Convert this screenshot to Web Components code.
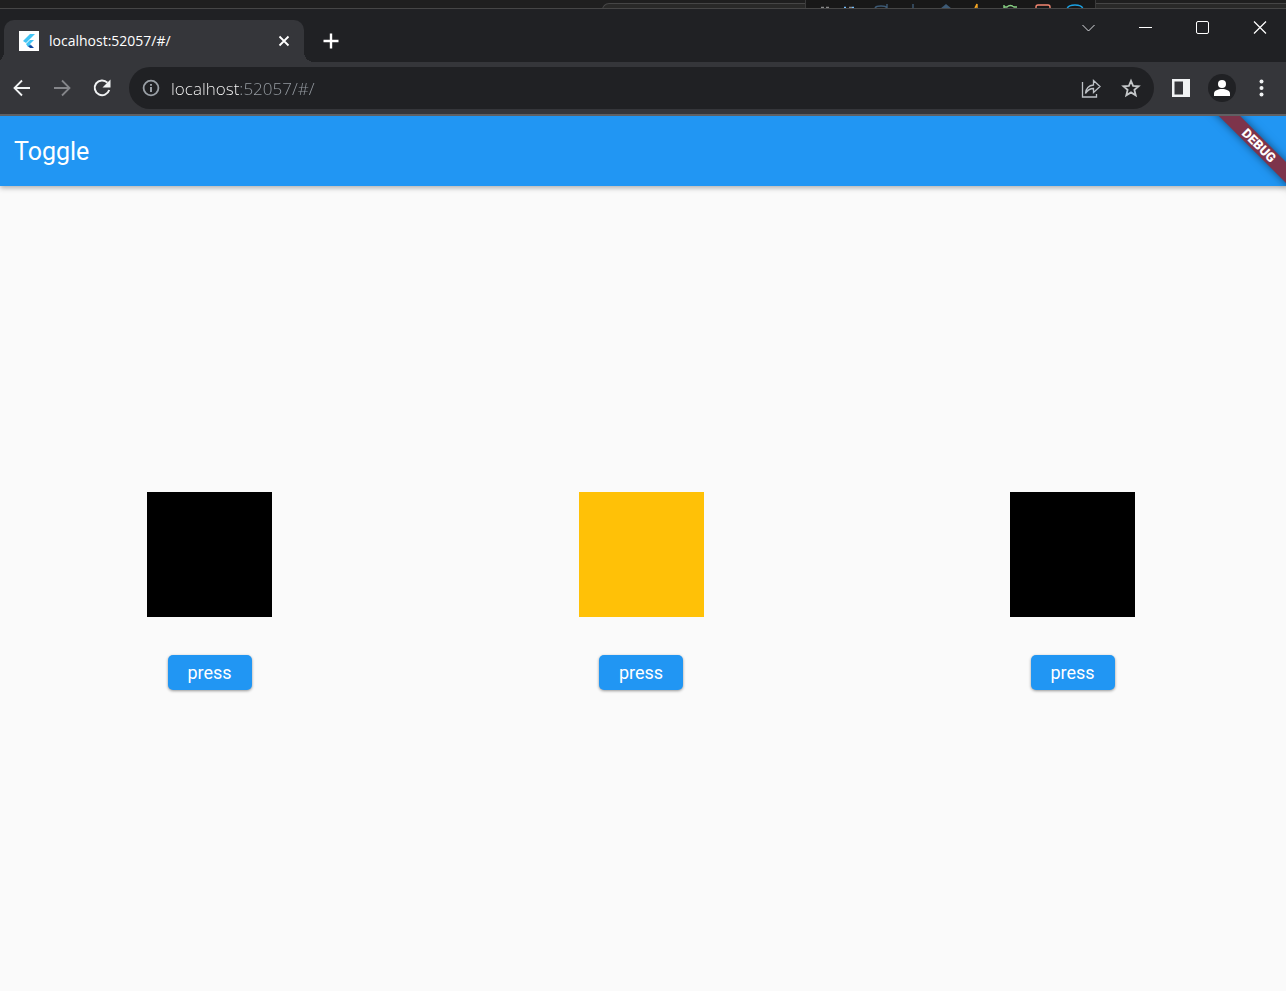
<!DOCTYPE html>
<html lang="en">
<head>
<meta charset="utf-8">
<title>localhost:52057/#/</title>
<style>
html, body { height: 100%; margin: 0; }
body { font-family: Roboto, "Liberation Sans", sans-serif; background: #202124; }
</style>
</head>
<body>
<browser-window>
  <browser-tab slot="tab">localhost:52057/#/</browser-tab>
  <toggle-app heading="Toggle">
    <toggle-box></toggle-box>
    <toggle-box on></toggle-box>
    <toggle-box></toggle-box>
  </toggle-app>
</browser-window>
<script>
const define = (name, html, setup) => {
  const template = document.createElement('template');
  template.innerHTML = html;
  customElements.define(name, class extends HTMLElement {
    constructor() {
      super();
      this.attachShadow({ mode: 'open' }).append(template.content.cloneNode(true));
      if (setup) setup(this);
    }
  });
};

define('desktop-strip', `
<style>
:host { display: flex; height: 8px; background: #1f1f1f; border-bottom: 1px solid #464646; overflow: hidden; }
.gap { flex: 603; }
.tab { flex: 203; box-sizing: border-box; margin-top: 3px; height: 12px; background: #292928; border: 1px solid #464646; border-right: 0; border-radius: 7px 0 0 0; }
.panel { flex: 290; background: #181818; box-sizing: border-box; border: solid #3a3a3a; border-width: 0 1px; }
.rest { flex: 190; margin-top: 3px; height: 12px; background: #292928; border-top: 1px solid #464646; }
svg { display: block; }
</style>
<div class="gap"></div><div class="tab"></div>
<div class="panel"><svg width="288" height="8" fill="none" stroke-width="1.4" aria-hidden="true">
<path d="M15 7.5h3M20 7.5h3M43 7.5h3" stroke="#888"/><path d="M38 7.5h2M46 7.5h2" stroke="#75beff"/>
<path d="M69 8q1-2 6-2t6 2M81 4v4M107 4v4" stroke="#3d5a75"/><path d="M134 9l6-5 6 5z" fill="#3d5a75"/>
<path d="M169 8l2-4v4" stroke="#f5a623"/><path d="M198 5v3M198 7h3q3-3 7 0h3M206 5v1" stroke="#89d185"/>
<path d="M230 9V7q0-2 2-2h10q2 0 2 2v2" stroke="#f48771"/><path d="M261 9q1-4 8-4t8 4" stroke="#1ba1e2"/></svg></div>
<div class="rest"></div>`);

define('browser-tab', `
<style>
:host { position: relative; display: flex; align-items: center; box-sizing: border-box; width: 300px; height: 42px; padding: 0 12px 0 15px;
  background: #35363a; border-radius: 10px 10px 0 0; color: #fff; font: 400 14px/20px "Open Sans", "Noto Sans", sans-serif; }
:host::before, :host::after { content: ""; position: absolute; bottom: 0; width: 10px; height: 10px; }
:host::before { right: 100%; background: radial-gradient(circle at 0 0, transparent 10px, #35363a 10px); }
:host::after { left: 100%; background: radial-gradient(circle at 100% 0, transparent 10px, #35363a 10px); }
.title { flex: 1; margin-left: 10px; white-space: nowrap; }
button { display: flex; padding: 0; border: 0; background: none; color: #fff; }
</style>
<svg width="20" height="20" viewBox="0 0 20 20" aria-hidden="true"><path fill="#fff" d="M0 0h20v20H0z"/>
<path fill="#42c5f5" d="M11 3h5L7 12 4 10z"/><path fill="#42c5f5" d="M11 9h4l-4 4 1 1-3 2-2-3z"/><path fill="#0d47a1" d="M9 15l3-1 3 3h-4z"/></svg>
<span class="title"><slot></slot></span>
<button aria-label="Close tab"><svg width="16" height="16" stroke="currentColor" stroke-width="1.8"><path d="M3.500 3.500l9 9M12.500 3.500l-9 9"/></svg></button>`);

const icons = {
  down: [26, '<path fill="none" stroke="#dadce0" d="M6.500 10l6 6 6-6"/>'],
  min: [26, '<path stroke="#fff" d="M6 12.500h13"/>'],
  max: [26, '<rect x="6.500" y="6.500" width="12" height="12" rx="1.500" fill="none" stroke="#fff"/>'],
  close: [26, '<path stroke="#fff" stroke-width="1.2" d="M7 6.500l12 12M19 6.500l-12 12"/>'],
  plus: [20, '<path stroke="#fff" stroke-width="2.400" d="M10 2.500v15M2.500 10h15"/>'],
  back: [24, '<path fill="none" stroke="#f1f3f4" stroke-width="1.800" d="M20 12H5M12 4.500L4.500 12l7.500 7.500"/>'],
  forward: [24, '<path fill="none" stroke="#85868a" stroke-width="1.800" d="M4 12h15M12 4.500l7.500 7.500-7.500 7.500"/>'],
  reload: [24, '<path fill="none" stroke="#f1f3f4" stroke-width="2" d="M17.400 6.600A7.400 7.400 0 1 0 19.200 14"/><path fill="#f1f3f4" d="M20.500 3.500v8h-8z"/>'],
  info: [20, '<circle cx="10" cy="10" r="7.400" fill="none" stroke="#9aa0a6" stroke-width="1.800"/><path stroke="#9aa0a6" stroke-width="2" d="M10 9v5M10 6v1.800"/>'],
  share: [24, '<path fill="none" stroke="#bdc1c6" stroke-width="1.300" d="M3.500 6v15h14v-3M6.500 17.500c.5-5 3-8 8-8.500V4.500l6.500 6-6.500 6v-4c-4 0-6 1.500-8 5z"/>'],
  star: [24, '<path fill="none" stroke="#c4c7c9" stroke-width="1.800" d="M12 4.800l2.100 5.100 5.500.4-4.200 3.600 1.300 5.400-4.700-2.900-4.700 2.900 1.300-5.400-4.200-3.600 5.500-.4z"/>'],
  side: [24, '<path fill="#f1f3f4" fill-rule="evenodd" d="M3 3h18v18H3zM5.500 5.500v13H14v-13z"/>'],
  user: [28, '<circle cx="14" cy="14" r="14" fill="#202124"/><circle cx="14" cy="10" r="4" fill="#fff"/><path fill="#fff" d="M6 22v-2.500c0-3 4-4.500 8-4.500s8 1.500 8 4.500V22z"/>'],
  menu: [20, '<g fill="#f1f3f4"><circle cx="10.500" cy="3.500" r="2"/><circle cx="10.500" cy="10" r="2"/><circle cx="10.500" cy="16.500" r="2"/></g>']
};
define('icon-button', `
<style>:host { display: flex; } button { display: flex; padding: 0; border: 0; background: none; }</style>
<button></button>`, el => {
  const [size, art] = icons[el.getAttribute('icon')];
  const button = el.shadowRoot.querySelector('button');
  button.setAttribute('aria-label', el.getAttribute('label'));
  button.innerHTML = `<svg width="${size}" height="${size}" viewBox="0 0 ${size} ${size}">${art}</svg>`;
});

define('address-bar', `
<style>
:host { flex: 1; display: flex; align-items: center; gap: 16px; box-sizing: border-box; height: 42px; min-width: 0; padding: 0 11px 0 12px; border-radius: 21px; background: #202124; }
input { flex: 1; min-width: 0; height: 28px; margin-left: -6px; padding: 0; border: 0; outline: 0; color: #fff; font: 300 17px "Open Sans", "Noto Sans", sans-serif;
  background: linear-gradient(to right, #fff 68px, #9aa0a6 68px); -webkit-background-clip: text; background-clip: text; -webkit-text-fill-color: transparent; }
</style>
<icon-button icon="info" label="View site information"></icon-button>
<input type="text" aria-label="Address and search bar" value="localhost:52057/#/" spellcheck="false">
<icon-button icon="share" label="Share this page"></icon-button>
<icon-button icon="star" label="Bookmark this tab"></icon-button>`);

define('browser-window', `
<style>
:host { display: flex; flex-direction: column; min-height: 100vh; }
.titlebar { display: flex; height: 53px; background: #202124; border-top-right-radius: 8px; }
.titlebar ::slotted(browser-tab) { margin: 11px 17px 0 4px; }
.plus { margin-top: 22px; }
.controls { display: flex; gap: 31px; margin: 6px 13px 0 auto; }
.toolbar { display: flex; align-items: center; height: 52px; padding: 0 15px 0 10px; background: #35363a; border-bottom: 2px solid #5f6063; }
.nav { display: flex; gap: 16px; margin-right: 15px; }
.actions { display: flex; align-items: center; gap: 15px; margin-left: 15px; }
.page { flex: 1; display: flex; }
.page ::slotted(*) { flex: 1; }
</style>
<desktop-strip></desktop-strip>
<div class="titlebar">
  <slot name="tab"></slot>
  <icon-button class="plus" icon="plus" label="New tab"></icon-button>
  <div class="controls">
    <icon-button icon="down" label="Search tabs"></icon-button>
    <icon-button icon="min" label="Minimize"></icon-button>
    <icon-button icon="max" label="Maximize"></icon-button>
    <icon-button icon="close" label="Close"></icon-button>
  </div>
</div>
<div class="toolbar">
  <div class="nav">
    <icon-button icon="back" label="Back"></icon-button>
    <icon-button icon="forward" label="Forward"></icon-button>
    <icon-button icon="reload" label="Reload"></icon-button>
  </div>
  <address-bar></address-bar>
  <div class="actions">
    <icon-button icon="side" label="Side panel"></icon-button>
    <icon-button icon="user" label="Profile"></icon-button>
    <icon-button icon="menu" label="Menu"></icon-button>
  </div>
</div>
<div class="page"><slot></slot></div>`);

define('debug-banner', `
<style>
:host { position: absolute; z-index: 2; top: 22px; right: -53px; width: 160px; height: 15px; transform: rotate(45deg); background: #7d344b; box-shadow: 0 0 8px rgba(0,0,0,.5);
  color: #fff; font: 900 13px/15px Roboto, sans-serif; text-align: center; }
</style>DEBUG`);

define('toggle-app', `
<style>
:host { position: relative; display: flex; flex-direction: column; overflow: hidden; background: #fafafa; }
header { position: relative; z-index: 1; display: flex; align-items: center; height: 70px; box-sizing: border-box; padding: 2px 14px 0; background: #2196f3; box-shadow: 0 2px 5px rgba(0,0,0,.3); }
h1 { margin: 0; color: #fff; font: 400 25px/30px Roboto, sans-serif; }
main { flex: 1; display: flex; align-items: center; justify-content: space-between; padding: 5px 151px 0 147px; }
</style>
<header><h1></h1></header>
<debug-banner></debug-banner>
<main><slot></slot></main>`, el => {
  el.shadowRoot.querySelector('h1').textContent = el.getAttribute('heading');
});

define('toggle-box', `
<style>
:host { display: flex; flex-direction: column; align-items: center; gap: 38px; }
.square { width: 125px; height: 125px; background: #000; }
:host([on]) .square { background: #ffc107; }
button { width: 84px; height: 35px; padding: 0; border: 0; border-radius: 5px; background: #2196f3; color: #fff; font: 400 18px/35px Roboto, sans-serif; box-shadow: 0 1px 3px rgba(0,0,0,.4); }
</style>
<div class="square"></div>
<button type="button">press</button>`, el => {
  el.shadowRoot.querySelector('button').addEventListener('click', () => el.toggleAttribute('on'));
});
</script>
</body>
</html>
